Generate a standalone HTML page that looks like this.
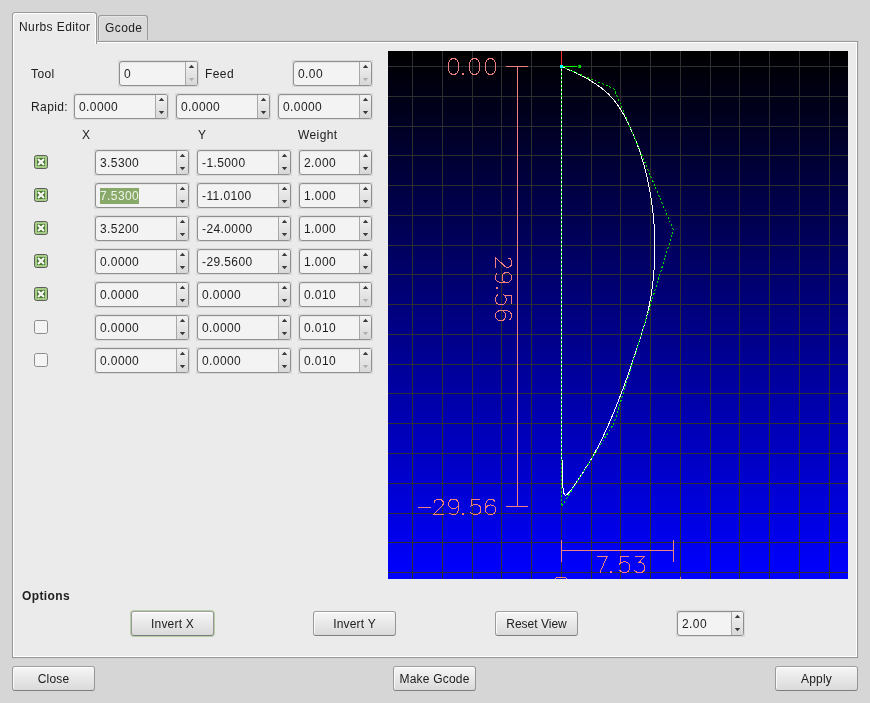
<!DOCTYPE html>
<html><head><meta charset="utf-8"><style>
html,body{margin:0;padding:0}
body{width:870px;height:703px;background:#d6d6d6;position:relative;overflow:hidden;will-change:transform;font-family:"Liberation Sans",sans-serif;font-size:12px;color:#202020;letter-spacing:0.4px}
.page{position:absolute;left:12px;top:41px;width:844px;height:615px;border:1px solid #999999;background:#ebebeb;box-shadow:inset 1px 1px 0 #ffffff, inset -1px -1px 0 #ffffff, 0 0 0 1px #d0d0d0}
.tab{position:absolute;border:1px solid #9a9a9a;border-bottom:none;border-radius:3px 3px 0 0}
.tab.act{left:12px;top:12px;width:83px;height:31px;background:#ebebeb;box-shadow:inset 1px 1px 0 #fff,inset -1px 0 0 #fff;z-index:2}
.tab.ina{left:98px;top:15px;width:48px;height:26px;background:#d9d9d9;box-shadow:inset 1px 1px 0 #e6e6e6}
.tab span{position:absolute;white-space:nowrap}
.lbl{position:absolute;white-space:nowrap;line-height:16px}
.bold{font-weight:bold}
.spin{position:absolute;box-sizing:border-box;border:1px solid #8f8f8f;border-radius:3px;background:#f3f3f3;box-shadow:inset 0 1px 0 #e6e6e6}
.ring{position:absolute;background:#dadada}
.ent{position:absolute;left:0;top:0;height:100%;padding-left:4px;box-sizing:border-box;line-height:24px;color:#1e1e1e;white-space:nowrap;overflow:hidden}
.btns{position:absolute;top:0;height:100%;border-left:1px solid #a8a8a8;background:linear-gradient(#f2f2f2,#d8d8d8);border-radius:0 2px 2px 0}
.sel{background:#89a96b;color:#eef5e8;padding:1px 0}
.cb{position:absolute}
.btn{position:absolute;box-sizing:border-box;border:1px solid;border-color:#a0a0a0 #959595 #7e7e7e #9a9a9a;border-radius:3px;background:linear-gradient(#f6f6f6,#dadada);box-shadow:inset 0 1px 0 #ffffff,inset 1px 0 0 #fafafa;text-align:center;color:#202020;white-space:nowrap;letter-spacing:0.2px}
.btn.focus{box-shadow:0 0 0 1px #b5cfa5,inset 0 1px 0 #ffffff}
</style></head><body>
<div class="tab ina"><span style="left:6px;top:5px">Gcode</span></div>
<div class="page"></div>
<div class="tab act"><span style="left:6px;top:7px">Nurbs Editor</span></div>
<div class="lbl" style="left:31px;top:66px;">Tool</div><div class="ring" style="left:118px;top:60px;width:81px;height:27px"></div><div class="spin" style="left:119px;top:61px;width:79px;height:25px">
<div class="ent" style="width:65px">0</div>
<div class="btns" style="left:65px;width:11px"><svg width="11" height="23" style="position:absolute;left:0;top:0"><path d="M2.8,6L5.5,2.8L8.2,6Z" fill="#3a3a3a"/><path d="M2.8,16L5.5,19.2L8.2,16Z" fill="#b0b0b0"/></svg></div>
</div><div class="lbl" style="left:205px;top:66px;">Feed</div><div class="ring" style="left:292px;top:60px;width:81px;height:27px"></div><div class="spin" style="left:293px;top:61px;width:79px;height:25px">
<div class="ent" style="width:65px">0.00</div>
<div class="btns" style="left:65px;width:11px"><svg width="11" height="23" style="position:absolute;left:0;top:0"><path d="M2.8,6L5.5,2.8L8.2,6Z" fill="#3a3a3a"/><path d="M2.8,16L5.5,19.2L8.2,16Z" fill="#b0b0b0"/></svg></div>
</div><div class="lbl" style="left:31px;top:99px;">Rapid:</div><div class="ring" style="left:73px;top:93px;width:96px;height:27px"></div><div class="spin" style="left:74px;top:94px;width:94px;height:25px">
<div class="ent" style="width:80px">0.0000</div>
<div class="btns" style="left:80px;width:11px"><svg width="11" height="23" style="position:absolute;left:0;top:0"><path d="M2.8,6L5.5,2.8L8.2,6Z" fill="#3a3a3a"/><path d="M2.8,16L5.5,19.2L8.2,16Z" fill="#3a3a3a"/></svg></div>
</div><div class="ring" style="left:175px;top:93px;width:96px;height:27px"></div><div class="spin" style="left:176px;top:94px;width:94px;height:25px">
<div class="ent" style="width:80px">0.0000</div>
<div class="btns" style="left:80px;width:11px"><svg width="11" height="23" style="position:absolute;left:0;top:0"><path d="M2.8,6L5.5,2.8L8.2,6Z" fill="#3a3a3a"/><path d="M2.8,16L5.5,19.2L8.2,16Z" fill="#3a3a3a"/></svg></div>
</div><div class="ring" style="left:277px;top:93px;width:96px;height:27px"></div><div class="spin" style="left:278px;top:94px;width:94px;height:25px">
<div class="ent" style="width:80px">0.0000</div>
<div class="btns" style="left:80px;width:11px"><svg width="11" height="23" style="position:absolute;left:0;top:0"><path d="M2.8,6L5.5,2.8L8.2,6Z" fill="#3a3a3a"/><path d="M2.8,16L5.5,19.2L8.2,16Z" fill="#3a3a3a"/></svg></div>
</div><div class="lbl" style="left:82px;top:127px;">X</div><div class="lbl" style="left:198px;top:127px;">Y</div><div class="lbl" style="left:298px;top:127px;">Weight</div><svg class="cb" style="left:34px;top:155px" width="14" height="14"><rect x="0.5" y="0.5" width="13" height="13" rx="2" fill="#a5cc85" stroke="#5c5c5c"/><rect x="3" y="3" width="8" height="8" fill="#4f7a35"/><path d="M4,4L10,10M10,4L4,10" stroke="#fff" stroke-width="2"/><rect x="5.5" y="5.5" width="3" height="3" fill="#f0f0f0"/></svg><div class="ring" style="left:94px;top:149px;width:96px;height:27px"></div><div class="spin" style="left:95px;top:150px;width:94px;height:25px">
<div class="ent" style="width:80px">3.5300</div>
<div class="btns" style="left:80px;width:11px"><svg width="11" height="23" style="position:absolute;left:0;top:0"><path d="M2.8,6L5.5,2.8L8.2,6Z" fill="#3a3a3a"/><path d="M2.8,16L5.5,19.2L8.2,16Z" fill="#3a3a3a"/></svg></div>
</div><div class="ring" style="left:196px;top:149px;width:96px;height:27px"></div><div class="spin" style="left:197px;top:150px;width:94px;height:25px">
<div class="ent" style="width:80px">-1.5000</div>
<div class="btns" style="left:80px;width:11px"><svg width="11" height="23" style="position:absolute;left:0;top:0"><path d="M2.8,6L5.5,2.8L8.2,6Z" fill="#3a3a3a"/><path d="M2.8,16L5.5,19.2L8.2,16Z" fill="#3a3a3a"/></svg></div>
</div><div class="ring" style="left:298px;top:149px;width:75px;height:27px"></div><div class="spin" style="left:299px;top:150px;width:73px;height:25px">
<div class="ent" style="width:59px">2.000</div>
<div class="btns" style="left:59px;width:11px"><svg width="11" height="23" style="position:absolute;left:0;top:0"><path d="M2.8,6L5.5,2.8L8.2,6Z" fill="#3a3a3a"/><path d="M2.8,16L5.5,19.2L8.2,16Z" fill="#3a3a3a"/></svg></div>
</div><svg class="cb" style="left:34px;top:188px" width="14" height="14"><rect x="0.5" y="0.5" width="13" height="13" rx="2" fill="#a5cc85" stroke="#5c5c5c"/><rect x="3" y="3" width="8" height="8" fill="#4f7a35"/><path d="M4,4L10,10M10,4L4,10" stroke="#fff" stroke-width="2"/><rect x="5.5" y="5.5" width="3" height="3" fill="#f0f0f0"/></svg><div class="ring" style="left:94px;top:182px;width:96px;height:27px"></div><div class="spin" style="left:95px;top:183px;width:94px;height:25px">
<div class="ent" style="width:80px"><span class="sel">7.5300</span></div>
<div class="btns" style="left:80px;width:11px"><svg width="11" height="23" style="position:absolute;left:0;top:0"><path d="M2.8,6L5.5,2.8L8.2,6Z" fill="#3a3a3a"/><path d="M2.8,16L5.5,19.2L8.2,16Z" fill="#3a3a3a"/></svg></div>
</div><div class="ring" style="left:196px;top:182px;width:96px;height:27px"></div><div class="spin" style="left:197px;top:183px;width:94px;height:25px">
<div class="ent" style="width:80px">-11.0100</div>
<div class="btns" style="left:80px;width:11px"><svg width="11" height="23" style="position:absolute;left:0;top:0"><path d="M2.8,6L5.5,2.8L8.2,6Z" fill="#3a3a3a"/><path d="M2.8,16L5.5,19.2L8.2,16Z" fill="#3a3a3a"/></svg></div>
</div><div class="ring" style="left:298px;top:182px;width:75px;height:27px"></div><div class="spin" style="left:299px;top:183px;width:73px;height:25px">
<div class="ent" style="width:59px">1.000</div>
<div class="btns" style="left:59px;width:11px"><svg width="11" height="23" style="position:absolute;left:0;top:0"><path d="M2.8,6L5.5,2.8L8.2,6Z" fill="#3a3a3a"/><path d="M2.8,16L5.5,19.2L8.2,16Z" fill="#3a3a3a"/></svg></div>
</div><svg class="cb" style="left:34px;top:221px" width="14" height="14"><rect x="0.5" y="0.5" width="13" height="13" rx="2" fill="#a5cc85" stroke="#5c5c5c"/><rect x="3" y="3" width="8" height="8" fill="#4f7a35"/><path d="M4,4L10,10M10,4L4,10" stroke="#fff" stroke-width="2"/><rect x="5.5" y="5.5" width="3" height="3" fill="#f0f0f0"/></svg><div class="ring" style="left:94px;top:215px;width:96px;height:27px"></div><div class="spin" style="left:95px;top:216px;width:94px;height:25px">
<div class="ent" style="width:80px">3.5200</div>
<div class="btns" style="left:80px;width:11px"><svg width="11" height="23" style="position:absolute;left:0;top:0"><path d="M2.8,6L5.5,2.8L8.2,6Z" fill="#3a3a3a"/><path d="M2.8,16L5.5,19.2L8.2,16Z" fill="#3a3a3a"/></svg></div>
</div><div class="ring" style="left:196px;top:215px;width:96px;height:27px"></div><div class="spin" style="left:197px;top:216px;width:94px;height:25px">
<div class="ent" style="width:80px">-24.0000</div>
<div class="btns" style="left:80px;width:11px"><svg width="11" height="23" style="position:absolute;left:0;top:0"><path d="M2.8,6L5.5,2.8L8.2,6Z" fill="#3a3a3a"/><path d="M2.8,16L5.5,19.2L8.2,16Z" fill="#3a3a3a"/></svg></div>
</div><div class="ring" style="left:298px;top:215px;width:75px;height:27px"></div><div class="spin" style="left:299px;top:216px;width:73px;height:25px">
<div class="ent" style="width:59px">1.000</div>
<div class="btns" style="left:59px;width:11px"><svg width="11" height="23" style="position:absolute;left:0;top:0"><path d="M2.8,6L5.5,2.8L8.2,6Z" fill="#3a3a3a"/><path d="M2.8,16L5.5,19.2L8.2,16Z" fill="#3a3a3a"/></svg></div>
</div><svg class="cb" style="left:34px;top:254px" width="14" height="14"><rect x="0.5" y="0.5" width="13" height="13" rx="2" fill="#a5cc85" stroke="#5c5c5c"/><rect x="3" y="3" width="8" height="8" fill="#4f7a35"/><path d="M4,4L10,10M10,4L4,10" stroke="#fff" stroke-width="2"/><rect x="5.5" y="5.5" width="3" height="3" fill="#f0f0f0"/></svg><div class="ring" style="left:94px;top:248px;width:96px;height:27px"></div><div class="spin" style="left:95px;top:249px;width:94px;height:25px">
<div class="ent" style="width:80px">0.0000</div>
<div class="btns" style="left:80px;width:11px"><svg width="11" height="23" style="position:absolute;left:0;top:0"><path d="M2.8,6L5.5,2.8L8.2,6Z" fill="#3a3a3a"/><path d="M2.8,16L5.5,19.2L8.2,16Z" fill="#3a3a3a"/></svg></div>
</div><div class="ring" style="left:196px;top:248px;width:96px;height:27px"></div><div class="spin" style="left:197px;top:249px;width:94px;height:25px">
<div class="ent" style="width:80px">-29.5600</div>
<div class="btns" style="left:80px;width:11px"><svg width="11" height="23" style="position:absolute;left:0;top:0"><path d="M2.8,6L5.5,2.8L8.2,6Z" fill="#3a3a3a"/><path d="M2.8,16L5.5,19.2L8.2,16Z" fill="#3a3a3a"/></svg></div>
</div><div class="ring" style="left:298px;top:248px;width:75px;height:27px"></div><div class="spin" style="left:299px;top:249px;width:73px;height:25px">
<div class="ent" style="width:59px">1.000</div>
<div class="btns" style="left:59px;width:11px"><svg width="11" height="23" style="position:absolute;left:0;top:0"><path d="M2.8,6L5.5,2.8L8.2,6Z" fill="#3a3a3a"/><path d="M2.8,16L5.5,19.2L8.2,16Z" fill="#3a3a3a"/></svg></div>
</div><svg class="cb" style="left:34px;top:287px" width="14" height="14"><rect x="0.5" y="0.5" width="13" height="13" rx="2" fill="#a5cc85" stroke="#5c5c5c"/><rect x="3" y="3" width="8" height="8" fill="#4f7a35"/><path d="M4,4L10,10M10,4L4,10" stroke="#fff" stroke-width="2"/><rect x="5.5" y="5.5" width="3" height="3" fill="#f0f0f0"/></svg><div class="ring" style="left:94px;top:281px;width:96px;height:27px"></div><div class="spin" style="left:95px;top:282px;width:94px;height:25px">
<div class="ent" style="width:80px">0.0000</div>
<div class="btns" style="left:80px;width:11px"><svg width="11" height="23" style="position:absolute;left:0;top:0"><path d="M2.8,6L5.5,2.8L8.2,6Z" fill="#3a3a3a"/><path d="M2.8,16L5.5,19.2L8.2,16Z" fill="#3a3a3a"/></svg></div>
</div><div class="ring" style="left:196px;top:281px;width:96px;height:27px"></div><div class="spin" style="left:197px;top:282px;width:94px;height:25px">
<div class="ent" style="width:80px">0.0000</div>
<div class="btns" style="left:80px;width:11px"><svg width="11" height="23" style="position:absolute;left:0;top:0"><path d="M2.8,6L5.5,2.8L8.2,6Z" fill="#3a3a3a"/><path d="M2.8,16L5.5,19.2L8.2,16Z" fill="#3a3a3a"/></svg></div>
</div><div class="ring" style="left:298px;top:281px;width:75px;height:27px"></div><div class="spin" style="left:299px;top:282px;width:73px;height:25px">
<div class="ent" style="width:59px">0.010</div>
<div class="btns" style="left:59px;width:11px"><svg width="11" height="23" style="position:absolute;left:0;top:0"><path d="M2.8,6L5.5,2.8L8.2,6Z" fill="#3a3a3a"/><path d="M2.8,16L5.5,19.2L8.2,16Z" fill="#b0b0b0"/></svg></div>
</div><svg class="cb" style="left:34px;top:320px" width="14" height="14"><rect x="0.5" y="0.5" width="13" height="13" rx="2" fill="#f4f4f4" stroke="#8c8c8c"/></svg><div class="ring" style="left:94px;top:314px;width:96px;height:27px"></div><div class="spin" style="left:95px;top:315px;width:94px;height:25px">
<div class="ent" style="width:80px">0.0000</div>
<div class="btns" style="left:80px;width:11px"><svg width="11" height="23" style="position:absolute;left:0;top:0"><path d="M2.8,6L5.5,2.8L8.2,6Z" fill="#3a3a3a"/><path d="M2.8,16L5.5,19.2L8.2,16Z" fill="#3a3a3a"/></svg></div>
</div><div class="ring" style="left:196px;top:314px;width:96px;height:27px"></div><div class="spin" style="left:197px;top:315px;width:94px;height:25px">
<div class="ent" style="width:80px">0.0000</div>
<div class="btns" style="left:80px;width:11px"><svg width="11" height="23" style="position:absolute;left:0;top:0"><path d="M2.8,6L5.5,2.8L8.2,6Z" fill="#3a3a3a"/><path d="M2.8,16L5.5,19.2L8.2,16Z" fill="#3a3a3a"/></svg></div>
</div><div class="ring" style="left:298px;top:314px;width:75px;height:27px"></div><div class="spin" style="left:299px;top:315px;width:73px;height:25px">
<div class="ent" style="width:59px">0.010</div>
<div class="btns" style="left:59px;width:11px"><svg width="11" height="23" style="position:absolute;left:0;top:0"><path d="M2.8,6L5.5,2.8L8.2,6Z" fill="#3a3a3a"/><path d="M2.8,16L5.5,19.2L8.2,16Z" fill="#b0b0b0"/></svg></div>
</div><svg class="cb" style="left:34px;top:353px" width="14" height="14"><rect x="0.5" y="0.5" width="13" height="13" rx="2" fill="#f4f4f4" stroke="#8c8c8c"/></svg><div class="ring" style="left:94px;top:347px;width:96px;height:27px"></div><div class="spin" style="left:95px;top:348px;width:94px;height:25px">
<div class="ent" style="width:80px">0.0000</div>
<div class="btns" style="left:80px;width:11px"><svg width="11" height="23" style="position:absolute;left:0;top:0"><path d="M2.8,6L5.5,2.8L8.2,6Z" fill="#3a3a3a"/><path d="M2.8,16L5.5,19.2L8.2,16Z" fill="#3a3a3a"/></svg></div>
</div><div class="ring" style="left:196px;top:347px;width:96px;height:27px"></div><div class="spin" style="left:197px;top:348px;width:94px;height:25px">
<div class="ent" style="width:80px">0.0000</div>
<div class="btns" style="left:80px;width:11px"><svg width="11" height="23" style="position:absolute;left:0;top:0"><path d="M2.8,6L5.5,2.8L8.2,6Z" fill="#3a3a3a"/><path d="M2.8,16L5.5,19.2L8.2,16Z" fill="#3a3a3a"/></svg></div>
</div><div class="ring" style="left:298px;top:347px;width:75px;height:27px"></div><div class="spin" style="left:299px;top:348px;width:73px;height:25px">
<div class="ent" style="width:59px">0.010</div>
<div class="btns" style="left:59px;width:11px"><svg width="11" height="23" style="position:absolute;left:0;top:0"><path d="M2.8,6L5.5,2.8L8.2,6Z" fill="#3a3a3a"/><path d="M2.8,16L5.5,19.2L8.2,16Z" fill="#b0b0b0"/></svg></div>
</div><svg width="460" height="528" viewBox="0 0 460 528" style="position:absolute;left:388px;top:51px;display:block">
<defs><linearGradient id="bg" x1="0" y1="0" x2="0" y2="1"><stop offset="0" stop-color="#000000"/><stop offset="1" stop-color="#0000ff"/></linearGradient></defs>
<rect width="460" height="528" fill="url(#bg)"/>
<path d="M24.5,0V528M54.5,0V528M84.5,0V528M113.5,0V528M143.5,0V528M173.5,0V528M0,15.5H460M203.5,0V528M0,45.5H460M232.5,0V528M0,75.5H460M262.5,0V528M0,104.5H460M292.5,0V528M0,134.5H460M322.5,0V528M0,164.5H460M351.5,0V528M0,194.5H460M381.5,0V528M0,223.5H460M411.5,0V528M0,253.5H460M441.5,0V528M0,283.5H460M0,313.5H460M0,342.5H460M0,372.5H460M0,402.5H460M0,432.5H460M0,462.5H460M0,491.5H460M0,521.5H460" stroke="#2e2e2e" stroke-width="1" fill="none" shape-rendering="crispEdges"/>
<g stroke="#f08080" stroke-width="1" fill="none" shape-rendering="crispEdges">
<path d="M173.5,0V15" stroke="#ff3030"/>
<path d="M129.5,15V455.5M118,15.5H140M118,455.5H140"/>
<path d="M173.5,489V511M285.5,489V511M173,499.5H286"/>
</g>
<g stroke="#f08080" stroke-width="1" fill="none" shape-rendering="crispEdges">
<path transform="translate(60.5,7.5)" d="M4,0.00L2,0.94L1,2.35L0,5.18L0,10.82L1,13.65L2,15.06L4,16.00L6,16.00L8,15.06L9,13.65L10,10.82L10,5.18L9,2.35L8,0.94L6,0.00Z"/><rect x="74" y="22" width="2" height="2" fill="#f08080" stroke="none"/><path transform="translate(81.5,7.5)" d="M4,0.00L2,0.94L1,2.35L0,5.18L0,10.82L1,13.65L2,15.06L4,16.00L6,16.00L8,15.06L9,13.65L10,10.82L10,5.18L9,2.35L8,0.94L6,0.00Z"/><path transform="translate(97.5,7.5)" d="M4,0.00L2,0.94L1,2.35L0,5.18L0,10.82L1,13.65L2,15.06L4,16.00L6,16.00L8,15.06L9,13.65L10,10.82L10,5.18L9,2.35L8,0.94L6,0.00Z"/><path d="M29.5,456.5h13"/><path transform="translate(45.5,448.5)" d="M0.5,3.53L0.5,2.65L1.5,1.06L3,0.26L4.5,0.00L6,0.00L7.5,0.26L9,1.06L9.8,2.65L9.8,4.41L9,6.00L7.5,7.50L0,15.00L10.5,15.00"/><path transform="translate(60.5,448.5)" d="M10,5.29L9.3,7.06L7.8,8.38L5.5,8.82L4.5,8.82L2.2,8.38L0.7,7.06L0,5.29L0,4.41L0.7,1.94L2.2,0.44L4.5,0.00L5.5,0.00L7.8,0.44L9.3,1.94L10,4.41L10,9.71L9.3,12.35L7.8,14.38L5.5,15.00L4,15.00L1.8,14.38L0.9,13.24"/><rect x="74" y="462" width="2" height="2" fill="#f08080" stroke="none"/><path transform="translate(82.5,448.5)" d="M9,0.00L1,0.00L0.5,6.62L2,5.56L4,5.12L6,5.12L8.3,5.74L10,7.50L10.5,9.71L10,12.35L8.3,14.38L6,15.00L4,15.00L1.8,14.38L0.7,13.50L0,12.35"/><path transform="translate(97.5,448.5)" d="M9.5,2.03L8.5,0.62L6,0.00L4.5,0.00L2.2,0.71L0.7,2.65L0,6.18L0,10.15L0.7,13.06L2.2,14.38L4.5,15.00L5.5,15.00L8,14.38L9.5,12.79L10.2,10.59L10.2,9.71L9.5,7.50L8,6.18L5.5,5.47L4.5,5.47L2.2,6.18L0.7,7.50L0,9.71"/><path transform="translate(208.5,505.5)" d="M0,0.00L10.5,0.00L3.5,16.00"/><rect x="222" y="520" width="2" height="2" fill="#f08080" stroke="none"/><path transform="translate(231.5,505.5)" d="M9,0.00L1,0.00L0.5,7.06L2,5.93L4,5.46L6,5.46L8.3,6.12L10,8.00L10.5,10.35L10,13.18L8.3,15.34L6,16.00L4,16.00L1.8,15.34L0.7,14.40L0,13.18"/><path transform="translate(246.5,505.5)" d="M0.5,0.00L9.5,0.00L4.5,6.12L6.5,6.12L8.8,7.06L10,8.94L10.3,11.29L9.8,13.65L8.5,15.34L6.5,16.00L3.5,16.00L1.5,15.34L0.5,14.40L-0.5,13.18"/>
<g transform="translate(124,206) rotate(90)"><path transform="translate(0.5,0.5)" d="M0.5,3.76L0.5,2.82L1.5,1.13L3,0.28L4.5,0.00L6,0.00L7.5,0.28L9,1.13L9.8,2.82L9.8,4.71L9,6.40L7.5,8.00L0,16.00L10.5,16.00"/><path transform="translate(15.5,0.5)" d="M10,5.65L9.3,7.53L7.8,8.94L5.5,9.41L4.5,9.41L2.2,8.94L0.7,7.53L0,5.65L0,4.71L0.7,2.07L2.2,0.47L4.5,0.00L5.5,0.00L7.8,0.47L9.3,2.07L10,4.71L10,10.35L9.3,13.18L7.8,15.34L5.5,16.00L4,16.00L1.8,15.34L0.9,14.12"/><rect x="30" y="14" width="2" height="2" fill="#f08080" stroke="none"/><path transform="translate(37.5,0.5)" d="M9,0.00L1,0.00L0.5,7.06L2,5.93L4,5.46L6,5.46L8.3,6.12L10,8.00L10.5,10.35L10,13.18L8.3,15.34L6,16.00L4,16.00L1.8,15.34L0.7,14.40L0,13.18"/><path transform="translate(53.5,0.5)" d="M9.5,2.16L8.5,0.66L6,0.00L4.5,0.00L2.2,0.75L0.7,2.82L0,6.59L0,10.82L0.7,13.93L2.2,15.34L4.5,16.00L5.5,16.00L8,15.34L9.5,13.65L10.2,11.29L10.2,10.35L9.5,8.00L8,6.59L5.5,5.84L4.5,5.84L2.2,6.59L0.7,8.00L0,10.35"/></g>
</g>
<path d="M173.5,15.5 L174.9,16.1 L176.2,16.7 L177.5,17.2 L178.8,17.8 L180.0,18.3 L181.2,18.8 L182.3,19.4 L183.4,19.9 L184.5,20.4 L185.5,20.8 L186.6,21.3 L187.6,21.8 L188.5,22.3 L189.5,22.7 L190.4,23.2 L191.3,23.6 L192.2,24.1 L193.0,24.5 L193.9,24.9 L194.7,25.3 L195.5,25.7 L196.2,26.2 L197.0,26.6 L197.7,27.0 L198.5,27.4 L199.2,27.8 L199.9,28.1 L200.5,28.5 L201.2,28.9 L201.9,29.3 L202.5,29.7 L203.1,30.0 L203.7,30.4 L204.3,30.8 L204.9,31.2 L205.5,31.5 L206.1,31.9 L206.7,32.2 L207.2,32.6 L207.7,33.0 L208.3,33.3 L208.8,33.7 L209.3,34.0 L209.8,34.4 L210.3,34.7 L210.8,35.1 L211.3,35.4 L211.8,35.8 L212.2,36.1 L212.7,36.5 L213.2,36.8 L213.6,37.2 L214.1,37.5 L214.5,37.9 L214.9,38.2 L215.3,38.6 L215.8,38.9 L216.2,39.3 L216.6,39.6 L217.0,40.0 L217.4,40.3 L217.8,40.7 L218.2,41.0 L218.6,41.4 L219.0,41.7 L219.3,42.1 L219.7,42.4 L220.1,42.8 L220.4,43.1 L220.8,43.5 L221.2,43.9 L221.5,44.2 L221.9,44.6 L222.2,45.0 L222.6,45.3 L222.9,45.7 L223.3,46.1 L223.6,46.4 L223.9,46.8 L224.3,47.2 L224.6,47.6 L224.9,47.9 L225.2,48.3 L225.6,48.7 L225.9,49.1 L226.2,49.5 L226.5,49.9 L226.8,50.3 L227.2,50.7 L227.5,51.1 L227.8,51.5 L228.1,51.9 L228.4,52.3 L228.7,52.7 L229.0,53.1 L229.3,53.6 L229.6,54.0 L229.9,54.4 L230.2,54.8 L230.5,55.3 L230.8,55.7 L231.1,56.2 L231.4,56.6 L231.7,57.1 L232.0,57.5 L232.3,58.0 L232.6,58.4 L232.9,58.9 L233.2,59.4 L233.5,59.9 L233.8,60.4 L234.1,60.9 L234.4,61.4 L234.6,61.9 L234.9,62.4 L235.2,62.9 L235.5,63.4 L235.8,63.9 L236.1,64.5 L236.4,65.0 L236.7,65.5 L237.0,66.1 L237.3,66.7 L237.6,67.2 L237.9,67.8 L238.2,68.4 L238.5,69.0 L238.8,69.6 L239.1,70.2 L239.4,70.8 L239.7,71.4 L240.0,72.0 L240.3,72.7 L240.7,73.3 L241.0,74.0 L241.3,74.7 L241.6,75.3 L241.9,76.0 L242.2,76.7 L242.6,77.4 L242.9,78.2 L243.2,78.9 L243.6,79.6 L243.9,80.4 L244.2,81.2 L244.6,81.9 L244.9,82.7 L245.3,83.5 L245.6,84.4 L246.0,85.2 L246.3,86.0 L246.7,86.9 L247.0,87.8 L247.4,88.6 L247.7,89.5 L248.1,90.4 L248.4,91.3 L248.7,92.2 L249.1,93.1 L249.4,94.0 L249.8,94.9 L250.1,95.9 L250.4,96.8 L250.8,97.7 L251.1,98.7 L251.4,99.7 L251.8,100.6 L252.1,101.6 L252.4,102.6 L252.8,103.6 L253.1,104.6 L253.4,105.6 L253.7,106.6 L254.0,107.6 L254.3,108.7 L254.7,109.7 L255.0,110.8 L255.3,111.8 L255.6,112.9 L255.9,114.0 L256.2,115.1 L256.5,116.1 L256.8,117.2 L257.1,118.3 L257.3,119.5 L257.6,120.6 L257.9,121.7 L258.2,122.8 L258.5,124.0 L258.7,125.1 L259.0,126.3 L259.3,127.5 L259.5,128.6 L259.8,129.8 L260.0,131.0 L260.3,132.2 L260.5,133.4 L260.8,134.6 L261.0,135.8 L261.3,137.1 L261.5,138.3 L261.7,139.5 L262.0,140.8 L262.2,142.0 L262.4,143.3 L262.6,144.6 L262.8,145.8 L263.0,147.1 L263.2,148.4 L263.4,149.7 L263.6,151.0 L263.8,152.3 L264.0,153.6 L264.1,155.0 L264.3,156.3 L264.5,157.6 L264.6,159.0 L264.8,160.3 L264.9,161.7 L265.1,163.0 L265.2,164.4 L265.4,165.7 L265.5,167.1 L265.6,168.5 L265.7,169.9 L265.8,171.3 L266.0,172.7 L266.1,174.1 L266.1,175.5 L266.2,176.9 L266.3,178.3 L266.4,179.7 L266.5,181.1 L266.5,182.5 L266.6,184.0 L266.6,185.4 L266.7,186.8 L266.7,188.3 L266.8,189.7 L266.8,191.2 L266.8,192.6 L266.8,194.1 L266.8,195.5 L266.8,197.0 L266.8,198.4 L266.8,199.9 L266.8,201.3 L266.8,202.8 L266.7,204.3 L266.7,205.7 L266.7,207.2 L266.6,208.7 L266.5,210.1 L266.5,211.6 L266.4,213.1 L266.3,214.6 L266.2,216.0 L266.1,217.5 L266.0,219.0 L265.9,220.4 L265.8,221.9 L265.7,223.4 L265.5,224.8 L265.4,226.3 L265.3,227.8 L265.1,229.2 L264.9,230.7 L264.8,232.2 L264.6,233.6 L264.4,235.1 L264.2,236.5 L264.0,238.0 L263.8,239.4 L263.6,240.9 L263.4,242.3 L263.2,243.7 L262.9,245.2 L262.7,246.6 L262.4,248.0 L262.2,249.4 L261.9,250.9 L261.6,252.3 L261.3,253.7 L261.1,255.1 L260.8,256.5 L260.5,257.9 L260.2,259.2 L259.8,260.6 L259.5,262.0 L259.2,263.4 L258.9,264.7 L258.5,266.1 L258.2,267.4 L257.8,268.8 L257.4,270.1 L257.1,271.4 L256.7,272.7 L256.3,274.0 L255.9,275.3 L255.5,276.6 L255.1,277.9 L254.7,279.2 L254.3,280.5 L253.9,281.7 L253.5,283.0 L253.1,284.3 L252.7,285.5 L252.3,286.8 L251.9,288.0 L251.5,289.3 L251.2,290.5 L250.8,291.7 L250.4,293.0 L250.0,294.2 L249.6,295.4 L249.2,296.6 L248.8,297.8 L248.4,299.0 L248.0,300.2 L247.6,301.4 L247.2,302.6 L246.8,303.8 L246.4,304.9 L246.0,306.1 L245.7,307.3 L245.3,308.4 L244.9,309.6 L244.5,310.8 L244.1,311.9 L243.7,313.0 L243.3,314.2 L242.9,315.3 L242.5,316.4 L242.2,317.6 L241.8,318.7 L241.4,319.8 L241.0,320.9 L240.6,322.0 L240.2,323.1 L239.8,324.2 L239.5,325.3 L239.1,326.4 L238.7,327.5 L238.3,328.5 L237.9,329.6 L237.5,330.7 L237.2,331.7 L236.8,332.8 L236.4,333.8 L236.0,334.9 L235.6,335.9 L235.2,336.9 L234.9,338.0 L234.5,339.0 L234.1,340.0 L233.7,341.0 L233.3,342.0 L233.0,343.0 L232.6,344.0 L232.2,345.0 L231.8,346.0 L231.4,347.0 L231.1,348.0 L230.7,349.0 L230.3,349.9 L229.9,350.9 L229.6,351.9 L229.2,352.8 L228.8,353.8 L228.4,354.7 L228.1,355.7 L227.7,356.6 L227.3,357.5 L226.9,358.5 L226.6,359.4 L226.2,360.3 L225.8,361.2 L225.4,362.1 L225.1,363.0 L224.7,363.9 L224.3,364.8 L223.9,365.7 L223.6,366.6 L223.2,367.4 L222.8,368.3 L222.5,369.2 L222.1,370.0 L221.7,370.9 L221.4,371.8 L221.0,372.6 L220.6,373.4 L220.2,374.3 L219.9,375.1 L219.5,375.9 L219.1,376.8 L218.8,377.6 L218.4,378.4 L218.0,379.2 L217.7,380.0 L217.3,380.8 L216.9,381.6 L216.6,382.4 L216.2,383.2 L215.8,383.9 L215.5,384.7 L215.1,385.5 L214.8,386.2 L214.4,387.0 L214.0,387.8 L213.7,388.5 L213.3,389.2 L212.9,390.0 L212.6,390.7 L212.2,391.4 L211.9,392.2 L211.5,392.9 L211.1,393.6 L210.8,394.3 L210.4,395.0 L210.1,395.7 L209.7,396.4 L209.3,397.1 L209.0,397.8 L208.6,398.5 L208.3,399.1 L207.9,399.8 L207.6,400.5 L207.2,401.1 L206.8,401.8 L206.5,402.4 L206.1,403.1 L205.8,403.7 L205.4,404.4 L205.1,405.0 L204.7,405.6 L204.4,406.2 L204.0,406.8 L203.6,407.5 L203.3,408.1 L202.9,408.7 L202.6,409.3 L202.2,409.9 L201.9,410.4 L201.5,411.0 L201.2,411.6 L200.8,412.2 L200.5,412.7 L200.1,413.3 L199.8,413.8 L199.4,414.4 L199.1,414.9 L198.7,415.5 L198.4,416.0 L198.1,416.5 L197.8,417.0 L197.4,417.5 L197.1,418.0 L196.8,418.5 L196.5,419.0 L196.2,419.5 L195.9,420.0 L195.6,420.4 L195.3,420.9 L195.0,421.4 L194.7,421.8 L194.4,422.3 L194.1,422.7 L193.9,423.1 L193.6,423.6 L193.3,424.0 L193.0,424.4 L192.8,424.8 L192.5,425.2 L192.3,425.6 L192.0,426.0 L191.7,426.4 L191.5,426.8 L191.2,427.2 L191.0,427.5 L190.8,427.9 L190.5,428.3 L190.3,428.6 L190.0,429.0 L189.8,429.3 L189.6,429.7 L189.4,430.0 L189.1,430.4 L188.9,430.7 L188.7,431.0 L188.5,431.4 L188.3,431.7 L188.0,432.0 L187.8,432.3 L187.6,432.6 L187.4,432.9 L187.2,433.2 L187.0,433.5 L186.8,433.8 L186.6,434.1 L186.4,434.4 L186.2,434.7 L186.0,434.9 L185.8,435.2 L185.6,435.5 L185.5,435.8 L185.3,436.0 L185.1,436.3 L184.9,436.5 L184.7,436.8 L184.6,437.0 L184.4,437.3 L184.2,437.5 L184.0,437.8 L183.9,438.0 L183.7,438.2 L183.5,438.4 L183.3,438.7 L183.2,438.9 L183.0,439.1 L182.9,439.3 L182.7,439.5 L182.5,439.7 L182.4,439.9 L182.2,440.1 L182.1,440.3 L181.9,440.5 L181.8,440.7 L181.6,440.9 L181.5,441.1 L181.3,441.2 L181.2,441.4 L181.0,441.6 L180.9,441.7 L180.7,441.9 L180.6,442.0 L180.4,442.2 L180.3,442.3 L180.2,442.5 L180.0,442.6 L179.9,442.7 L179.8,442.8 L179.6,443.0 L179.5,443.1 L179.4,443.2 L179.2,443.3 L179.1,443.4 L179.0,443.5 L178.8,443.6 L178.7,443.6 L178.6,443.7 L178.5,443.8 L178.3,443.8 L178.2,443.9 L178.1,443.9 L178.0,444.0 L177.8,444.0 L177.7,444.0 L177.6,444.0 L177.5,444.0 L177.4,444.0 L177.3,444.0 L177.1,443.9 L177.0,443.9 L176.9,443.8 L176.8,443.7 L176.7,443.6 L176.6,443.5 L176.5,443.3 L176.4,443.2 L176.3,443.0 L176.1,442.8 L176.0,442.5 L175.9,442.2 L175.8,441.9 L175.7,441.6 L175.6,441.2 L175.5,440.7 L175.4,440.2 L175.3,439.6 L175.2,439.0 L175.1,438.2 L175.0,437.4 L174.9,436.4 L174.8,435.3 L174.7,434.0 L174.6,432.5 L174.5,430.8 L174.4,428.7 L174.3,426.2 L174.3,423.2 L174.2,419.4 L174.1,414.6 L174.0,408.4 L173.9,399.9 L173.8,387.9 L173.7,369.3 L173.6,337.1 L173.6,268.0 L173.5,15.5" stroke="#ffffff" stroke-width="1" fill="none" shape-rendering="crispEdges"/>
<path d="M173.5,15.5 L226.0,37.8 L285.5,179.3 L225.9,372.6 L173.5,455.4 L173.5,15.5" stroke="#00e000" stroke-width="1" fill="none" stroke-dasharray="2,2" shape-rendering="crispEdges"/>
<path d="M175,15.5H189" stroke="#00ff00" stroke-width="1" shape-rendering="crispEdges"/>
<path d="M190,14.5H192.5V16.5H190M191,15.5H192" stroke="#00e000" stroke-width="1" fill="none" shape-rendering="crispEdges"/>
<path d="M167,527.5L169,526.5H177L179,527.5M292.5,526V528" stroke="#f08080" stroke-width="1" fill="none" shape-rendering="crispEdges"/>
<rect x="172" y="14" width="3" height="3" fill="#00ffff"/>
</svg><div class="lbl bold" style="left:22px;top:588px">Options</div><div class="btn focus" style="left:131px;top:611px;width:83px;height:25px;line-height:25px">Invert X</div><div class="btn" style="left:313px;top:611px;width:83px;height:25px;line-height:25px">Invert Y</div><div class="btn" style="left:495px;top:611px;width:83px;height:25px;line-height:25px"><span style="letter-spacing:0">Reset View</span></div><div class="ring" style="left:676px;top:610px;width:69px;height:27px"></div><div class="spin" style="left:677px;top:611px;width:67px;height:25px">
<div class="ent" style="width:53px">2.00</div>
<div class="btns" style="left:53px;width:11px"><svg width="11" height="23" style="position:absolute;left:0;top:0"><path d="M2.8,6L5.5,2.8L8.2,6Z" fill="#3a3a3a"/><path d="M2.8,16L5.5,19.2L8.2,16Z" fill="#3a3a3a"/></svg></div>
</div><div class="btn" style="left:12px;top:666px;width:83px;height:25px;line-height:25px">Close</div><div class="btn" style="left:393px;top:666px;width:83px;height:25px;line-height:25px">Make Gcode</div><div class="btn" style="left:775px;top:666px;width:83px;height:25px;line-height:25px">Apply</div>
</body></html>
